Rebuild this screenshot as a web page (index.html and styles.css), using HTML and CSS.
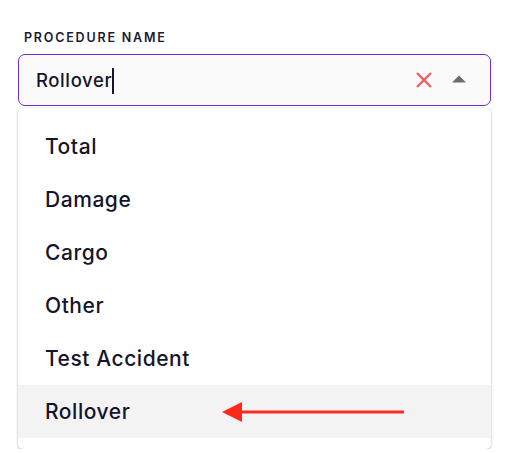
FILE: index.html
```html
<!DOCTYPE html>
<html>
<head>
<meta charset="utf-8">
<link rel="stylesheet" href="styles.css">
</head>
<body>
<div class="field">
  <div class="label">PROCEDURE NAME</div>
  <div class="input">
    <span class="value">Rollover</span><span class="caret"></span>
    <span class="spacer"></span>
    <svg class="clear" width="18" height="18" viewBox="0 0 18 18"><path d="M2 2 L16 16 M16 2 L2 16" stroke="#ec5a5a" stroke-width="2.2" fill="none"/></svg>
    <svg class="toggle" width="16" height="8" viewBox="0 0 16 8"><path d="M1 7.5 L8 0.5 L15 7.5 Z" fill="#6b6b6b"/></svg>
  </div>
  <ul class="menu">
    <li class="item">Total</li>
    <li class="item">Damage</li>
    <li class="item">Cargo</li>
    <li class="item">Other</li>
    <li class="item">Test Accident</li>
    <li class="item active">Rollover
      <svg class="arrow" width="184" height="24" viewBox="0 0 184 24"><path d="M20 10.5 H182 V13.5 H20 Z" fill="#ff2a1f"/><path d="M0 12 L20 2 L20 22 Z" fill="#ff2a1f"/></svg>
    </li>
  </ul>
</div>
</body>
</html>
```
FILE: styles.css
```css
html, body {
  margin: 0;
  padding: 0;
  background: #ffffff;
}
body {
  font-family: Inter, "Noto Sans", sans-serif;
  color: #14142b;
}
.field {
  width: 473px;
  padding: 30px 0 0 18px;
}
.label {
  font-size: 12.5px;
  font-weight: 600;
  letter-spacing: 1.8px;
  padding-left: 6px;
  line-height: 16px;
  height: 24px;
  color: #1a1a33;
}
.input {
  box-sizing: border-box;
  height: 52px;
  border: 1.5px solid #6c2bd9;
  border-radius: 7px;
  background: #fafafa;
  display: flex;
  align-items: center;
  padding: 0 23px 0 17px;
}
.value {
  font-size: 18.5px;
  font-weight: 500;
  letter-spacing: 0.6px;
  color: #14142b;
}
.caret {
  width: 1.5px;
  height: 26px;
  background: #14142b;
  margin-left: 0px;
  margin-top: 2px;
}
.spacer { flex: 1; }
.clear { margin-right: 18px; }
.toggle { margin-top: -2px; }
.menu {
  list-style: none;
  margin: 2px 0 0 0;
  padding: 12px 0 11px 0;
  background: #ffffff;
  border-radius: 5px;
  box-shadow: 0 1px 3px rgba(0,0,0,0.25), 0 0 1px rgba(0,0,0,0.12);
}
.item {
  position: relative;
  height: 53px;
  display: flex;
  align-items: center;
  padding-left: 27px;
  font-size: 21px;
  font-weight: 500;
  letter-spacing: 0.55px;
  color: #14142b;
}
.item.active {
  background: #f3f3f3;
}
.arrow {
  position: absolute;
  left: 204px;
  top: 15px;
}
```
